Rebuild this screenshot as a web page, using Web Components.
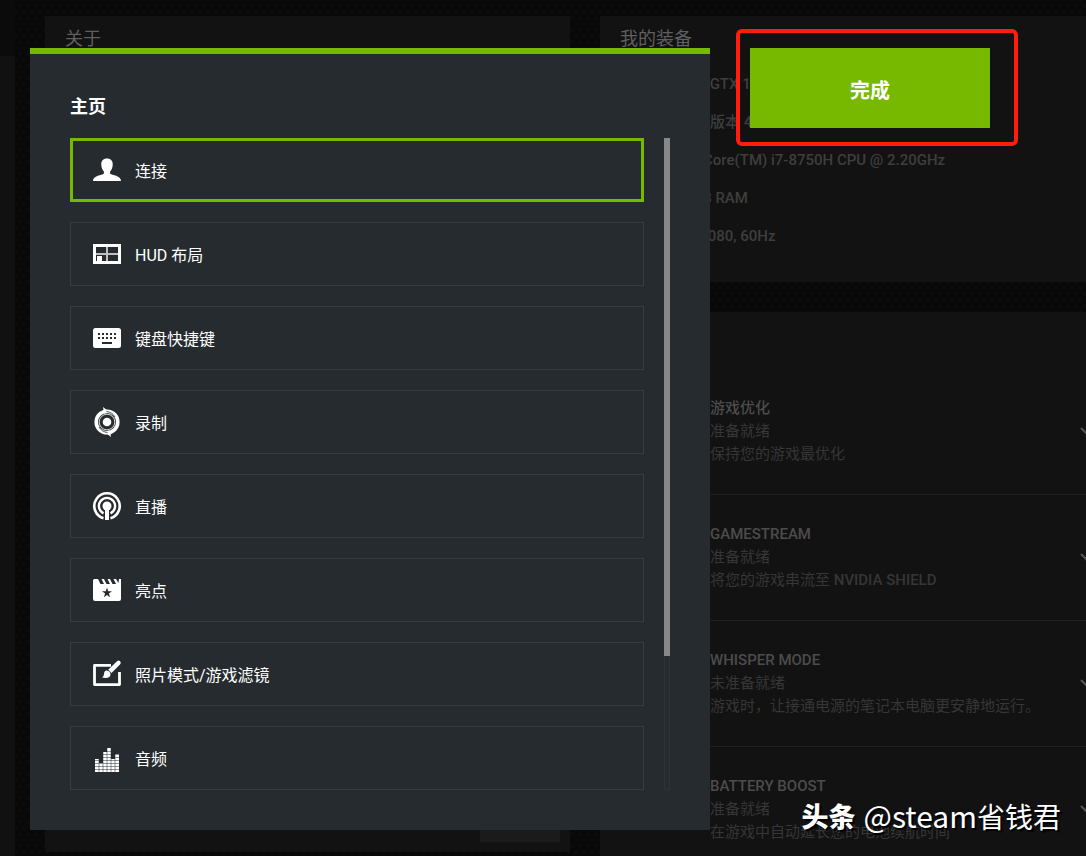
<!DOCTYPE html>
<html lang="zh-CN">
<head>
<meta charset="utf-8">
<title>GeForce Experience</title>
<style>
    html, body {
        margin: 0;
        height: 100%;
        overflow: hidden;
        background: #0a0a0a;
    }
    body {
        font-family: Roboto, "Noto Sans CJK SC", sans-serif;
    }
</style>
</head>
<body>
<share-app></share-app>

<script>
const ICONS = {
    user: `<path d="M14 2.500c-3.900 0-6 2.600-5.700 6.500.1 3 1.200 5 2.600 6.500v2.100C9 19.500 0 19.500 0 25h28C28 19.500 19 19.500 17.100 17.600v-2.100c1.400-1.500 2.500-3.500 2.600-6.500C20 5.100 17.900 2.500 14 2.500z"/>`,
    hud: `<path fill-rule="evenodd" d="M0 4h28v20H0zM3 7v14h22V7z"/><path opacity=".7" d="M13 7h2v14h-2zM3 13h22v2H3z"/><path d="M4 16h5v5H4z"/>`,
    keyboard: `<path fill-rule="evenodd" d="M2.500 4h23Q28 4 28 6.500v15q0 2.500-2.500 2.500h-23Q0 24 0 21.500v-15Q0 4 2.500 4zM5 9v2h2V9zm4 0v2h2V9zm4 0v2h2V9zm4 0v2h2V9zm4 0v2h2V9zM5 13v2h2v-2zm4 0v2h2v-2zm4 0v2h2v-2zm4 0v2h2v-2zm4 0v2h2v-2zM9 18v2h10v-2z"/>`,
    record: `<circle cx="14" cy="14" r="10.800" fill="none" stroke="currentColor" stroke-width="3.600"/><circle cx="14" cy="14" r="7.800" fill="none" stroke="currentColor" stroke-width="1" opacity=".8"/><circle cx="14" cy="14" r="4.300"/><path d="M10-1l7 5.500-6 1zM18 29l-7-5.500 6-1z"/><path d="M13.500 3.500q5.500 .5 8.500 5.500M14.500 24.500q-5.500-.5-8.500-5.500" fill="none" stroke="#262b2f" stroke-width=".8"/>`,
    broadcast: `<g fill="none" stroke="currentColor"><path stroke-width="2.600" d="M10.500 26.200a12.700 12.700 0 1 1 7 0"/><path stroke-width="2.400" d="M10.500 21.300a8.100 8.100 0 1 1 7 0"/></g><circle cx="14" cy="14" r="4.500"/><path d="M12 14h4v14h-4z"/>`,
    clip: `<path fill-rule="evenodd" d="M1.500 3H5l2.500 5h3.500L8.500 3H11l2.500 5H17l-2.500-5H17l2.500 5H23l-2.500-5H23l2.500 4L26 3h2v20q0 2-2 2H2q-2 0-2-2V4.500Q0 3 1.500 3zM14 11.500l-1.200 3.800H9l3.100 2.300-1.200 3.700 3.100-2.300 3.100 2.300-1.200-3.700 3.100-2.300h-3.800z"/>`,
    photo: `<path fill="none" stroke="currentColor" stroke-width="2.800" stroke-linejoin="round" d="M18 5.400H1.500v19.200h25V12"/><path d="M24 1.200q1.700-1.400 3.100 0t.1 3.100L18.500 13 15.200 9.700zM13.500 10.500q4.300 .5 4 4.500-1 4-8.500 2.500 2-1 2-3.500 .3-3.200 2.500-3.500z"/>`,
    audio: `<path d="M2 15h4v13H2zM6 19h4v9H6zM10 8h4v20h-4zM14 4h4v24h-4zM18 15h4v13h-4zM22 10h4v18h-4z"/><path stroke="#262b2f" stroke-width=".5" d="M2 7.500h24M2 10.500h24M2 13.500h24M2 16.500h24M2 19.500h24M2 22.500h24M2 25.500h24M6 4v24M10 4v24M14 4v24M18 4v24M22 4v24"/>`
};

const MENU = [
    ['user', '连接'],
    ['hud', 'HUD 布局'],
    ['keyboard', '键盘快捷键'],
    ['record', '录制'],
    ['broadcast', '直播'],
    ['clip', '亮点'],
    ['photo', '照片模式/游戏滤镜'],
    ['audio', '音频']
];

const SPECS = [
    'GeForce GTX 1060',
    '驱动程序版本 430.86',
    'Intel(R) Core(TM) i7-8750H CPU @ 2.20GHz',
    '15.88 GB RAM',
    '1920 x 1080, 60Hz'
];

const FEATURES = [
    ['游戏优化', '准备就绪', '保持您的游戏最优化'],
    ['GAMESTREAM', '准备就绪', '将您的游戏串流至 <b>NVIDIA SHIELD</b>'],
    ['WHISPER MODE', '未准备就绪', '游戏时，让接通电源的笔记本电脑更安静地运行。'],
    ['BATTERY BOOST', '准备就绪', '在游戏中自动延长您的电池续航时间']
];

class ShareIcon extends HTMLElement {
    connectedCallback() {
        this.attachShadow({ mode: 'open' });
        this.shadowRoot.innerHTML = `
            <style>
                :host { display: block; flex: none; width: 28px; height: 28px; }
                svg { display: block; overflow: visible; fill: currentColor; }
            </style>
            <svg viewBox="0 0 28 28" width="28" height="28" aria-hidden="true">${ICONS[this.getAttribute('name')]}</svg>
        `;
    }
}

class MenuItem extends HTMLElement {
    connectedCallback() {
        this.attachShadow({ mode: 'open' });
        this.shadowRoot.innerHTML = `
            <style>
                :host { display: block; }
                button {
                    display: flex;
                    align-items: center;
                    gap: 14px;
                    box-sizing: border-box;
                    width: 100%;
                    height: 64px;
                    padding: 0 22px;
                    border: 1px solid #3a3b3c;
                    background: transparent;
                    color: #fff;
                    font: 400 16px/24px Roboto, "Noto Sans CJK SC", sans-serif;
                    text-align: left;
                    cursor: pointer;
                }
                span { padding-top: 3px; }
                :host([selected]) button {
                    border-color: #76b900;
                    box-shadow: inset 0 0 0 2px #76b900;
                }
            </style>
            <button type="button">
                <share-icon name="${this.getAttribute('icon')}"></share-icon>
                <span><slot></slot></span>
            </button>
        `;
        this.addEventListener('click', () => {
            this.parentNode.querySelectorAll('menu-item').forEach(el => el.removeAttribute('selected'));
            this.setAttribute('selected', '');
        });
    }
}

class FeatureRow extends HTMLElement {
    connectedCallback() {
        this.attachShadow({ mode: 'open' });
        this.shadowRoot.innerHTML = `
            <style>
                :host {
                    display: flex;
                    align-items: center;
                    justify-content: space-between;
                    padding: 28px 30px 28px 110px;
                    border-bottom: 1px solid #202020;
                    font-size: 15px;
                    line-height: 23px;
                    color: #363636;
                    white-space: nowrap;
                }
                h3 { margin: 0; font-size: 15px; font-weight: 500; color: #4c4c4c; }
                p { margin: 0; }
                svg { flex: none; fill: none; stroke: #555; stroke-width: 2; }
            </style>
            <div>
                <h3><slot name="name"></slot></h3>
                <p><slot name="state"></slot></p>
                <p><slot></slot></p>
            </div>
            <svg width="16" height="10" viewBox="0 0 16 10" aria-hidden="true"><path d="M1 1l7 7 7-7"/></svg>
        `;
    }
}

class PageCard extends HTMLElement {
    connectedCallback() {
        this.attachShadow({ mode: 'open' });
        this.shadowRoot.innerHTML = `
            <style>
                :host {
                    display: flex;
                    flex-direction: column;
                    box-sizing: border-box;
                    background: rgba(22, 22, 22, .75);
                }
                h2 {
                    margin: 0;
                    padding: 10px 20px 13px;
                    font-size: 18px;
                    line-height: 26px;
                    font-weight: 400;
                    color: #5f5f5f;
                }
            </style>
            <h2>${this.getAttribute('heading')}</h2>
            <slot></slot>
        `;
    }
}

class HomePage extends HTMLElement {
    connectedCallback() {
        this.attachShadow({ mode: 'open' });
        this.shadowRoot.innerHTML = `
            <style>
                :host {
                    display: flex;
                    gap: 30px;
                    height: 100%;
                    box-sizing: border-box;
                    background:
                        radial-gradient(circle, #0b0b0b 2px, transparent 3px) 0 0 / 8px 12px,
                        radial-gradient(circle, #0b0b0b 2px, transparent 3px) 4px 6px / 8px 12px,
                        #080808;
                }
                .rail { flex: 0 0 15px; margin-top: 56px; background: #111; box-shadow: 0 -56px #0b0b0b; }
                .about { flex: 0 0 525px; margin: 16px 0 4px; }
                .about div {
                    width: 80px;
                    height: 40px;
                    margin: auto 10px 10px auto;
                    background: #1b1b1b;
                }
                /* the right column runs past the window edge */
                .side {
                    flex: 1;
                    min-width: 0;
                    display: flex;
                    flex-direction: column;
                    gap: 30px;
                    margin: 16px -40px 0 0;
                }
                .rig { flex: none; height: 266px; }
                .features { flex: 1; }
                .features feature-row:first-child { margin-top: 8px; }
                ul { list-style: none; margin: 0; padding: 0 20px 0 50px; }
                li { font-size: 15px; font-weight: 500; line-height: 38px; color: #3e3e3e; white-space: nowrap; }
                b { font-weight: 500; }
            </style>
            <div class="rail"></div>
            <page-card class="about" heading="关于"><div></div></page-card>
            <div class="side">
                <page-card class="rig" heading="我的装备">
                    <ul>${SPECS.map(s => `<li>${s}</li>`).join('')}</ul>
                </page-card>
                <page-card class="features" heading="功能">
                    ${FEATURES.map(([name, state, text]) => `
                        <feature-row>
                            <span slot="name">${name}</span>
                            <span slot="state">${state}</span>
                            ${text}
                        </feature-row>
                    `).join('')}
                </page-card>
            </div>
        `;
    }
}

class SettingsPanel extends HTMLElement {
    connectedCallback() {
        this.attachShadow({ mode: 'open' });
        this.shadowRoot.innerHTML = `
            <style>
                :host {
                    display: block;
                    box-sizing: border-box;
                    border-top: 6px solid #76b900;
                    padding: 40px;
                    background: #262b2f;
                    color: #fff;
                }
                h1 { margin: 0 0 18px; font-size: 18px; line-height: 26px; font-weight: 700; }
                .body { display: flex; gap: 20px; }
                .list { flex: 1; display: flex; flex-direction: column; gap: 20px; }
                .track { box-sizing: border-box; width: 6px; border: 1px solid #2d3235; }
                .thumb { height: 518px; margin: -1px; background: #878889; }
            </style>
            <h1>${this.getAttribute('heading')}</h1>
            <div class="body">
                <div class="list"><slot></slot></div>
                <div class="track"><div class="thumb"></div></div>
            </div>
        `;
    }
}

class DoneButton extends HTMLElement {
    connectedCallback() {
        this.attachShadow({ mode: 'open' });
        this.shadowRoot.innerHTML = `
            <style>
                :host {
                    display: block;
                    padding: 15px 24px 14px 10px;
                    border: 4px solid #ff1d0d;
                    border-radius: 6px;
                }
                button {
                    display: block;
                    width: 240px;
                    height: 80px;
                    padding: 5px 0 0;
                    border: 0;
                    background: #76b900;
                    color: #fff;
                    font: 700 20px/30px Roboto, "Noto Sans CJK SC", sans-serif;
                    cursor: pointer;
                }
            </style>
            <button type="button"><slot></slot></button>
        `;
    }
}

class ShareApp extends HTMLElement {
    connectedCallback() {
        this.attachShadow({ mode: 'open' });
        this.shadowRoot.innerHTML = `
            <style>
                :host { display: block; position: relative; height: 100%; overflow: hidden; }
                .overlay {
                    position: absolute;
                    inset: 0;
                    display: flex;
                    align-items: flex-start;
                    gap: 26px;
                    padding: 29px 30px 0;
                }
                settings-panel { flex: 0 1 680px; margin-top: 19px; }
                .mark {
                    position: absolute;
                    right: 25px;
                    bottom: 20px;
                    display: flex;
                    align-items: center;
                    gap: 8px;
                    font: 400 28px/40px "Noto Sans CJK SC", sans-serif;
                    color: #fff;
                    text-shadow: 2px 2px 1px #000;
                    white-space: nowrap;
                }
                .mark b { font-size: 27px; font-weight: 900; }
                .mark i { font-size: 30px; font-style: normal; }
            </style>
            <home-page></home-page>
            <div class="overlay">
                <settings-panel heading="主页">
                    ${MENU.map(([icon, label], i) => `<menu-item icon="${icon}"${i === 0 ? ' selected' : ''}>${label}</menu-item>`).join('')}
                </settings-panel>
                <done-button>完成</done-button>
            </div>
            <div class="mark"><b>头条</b><span><i>@steam</i>省钱君</span></div>
        `;
    }
}

customElements.define('share-icon', ShareIcon);
customElements.define('menu-item', MenuItem);
customElements.define('feature-row', FeatureRow);
customElements.define('page-card', PageCard);
customElements.define('home-page', HomePage);
customElements.define('settings-panel', SettingsPanel);
customElements.define('done-button', DoneButton);
customElements.define('share-app', ShareApp);
</script>
</body>
</html>
